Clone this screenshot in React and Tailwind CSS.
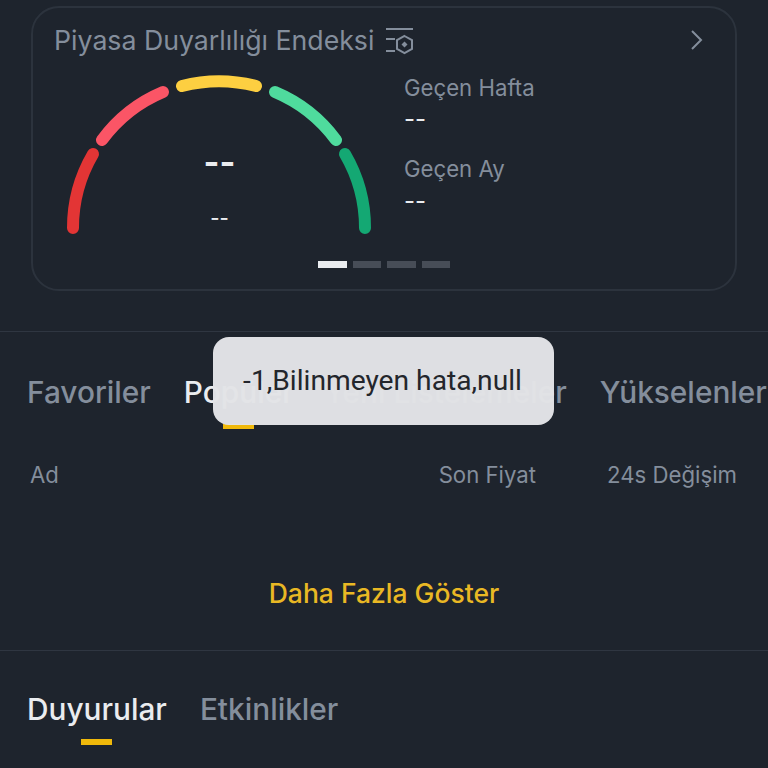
export default function App() {
  return (
    <div className="relative w-[768px] h-[768px] overflow-hidden bg-[#1e242d] font-['Inter','Liberation_Sans',sans-serif]">
      <div className="pt-[6px] px-[31px]">
        <section className="h-[285px] rounded-[28px] border-2 border-[#2c333d] flex flex-col">
          <header className="flex items-center pl-[21px] pr-[30px] pt-[15px] h-[49px]">
            <h2 className="text-[26.7px] leading-[34px] text-[#848e9c] font-normal whitespace-nowrap">Piyasa Duyarlılığı Endeksi</h2>
            <svg className="ml-[11px] mt-[3px]" width="30" height="30" viewBox="0 0 30 30" fill="none" stroke="#848e9c" strokeWidth="2">
              <path d="M1 2h27M1 12h9M1 24h9" />
              <path d="M19.5 9l7.5 4.2v8.6l-7.5 4.2-7.5-4.2v-8.6z" />
              <path d="M19.5 14.5l3 3-3 3-3-3z" fill="#848e9c" stroke="none" />
            </svg>
            <svg className="ml-auto" width="16" height="22" viewBox="0 0 16 22" fill="none" stroke="#848e9c" strokeWidth="2">
              <path d="M3 2l9 9-9 9" />
            </svg>
          </header>
          <div className="flex pl-[32px] pt-[16px]">
            <div className="relative w-[312px] h-[170px] shrink-0">
              <svg width="312" height="170" viewBox="0 0 312 170" fill="none" strokeWidth="12" strokeLinecap="round">
                <path d="M8 155A146 146 0 0 1 28 81" stroke="#e33535" />
                <path d="M37 67A146 146 0 0 1 98 19" stroke="#fb5566" />
                <path d="M117 13A146 146 0 0 1 191 13" stroke="#fdcf41" />
                <path d="M210 19A146 146 0 0 1 271 67" stroke="#4fdb9d" />
                <path d="M280 81A146 146 0 0 1 300 155" stroke="#14a873" />
              </svg>
              <div className="absolute inset-x-0 top-[72px] flex flex-col items-center pr-[3px]">
                <span className="text-[34px] leading-[34px] font-bold text-[#eaecef]">--</span>
                <span className="mt-[22px] text-[20px] leading-[34px] font-medium text-[#eaecef]">--</span>
              </div>
            </div>
            <div className="ml-[27px] -mt-[2px] flex flex-col">
              <span className="text-[22.2px] leading-[34px] text-[#848e9c]">Geçen Hafta</span>
              <span className="text-[24px] leading-[28px] text-[#eaecef]">--</span>
              <span className="text-[22.2px] leading-[34px] text-[#848e9c] mt-[19px]">Geçen Ay</span>
              <span className="text-[24px] leading-[28px] text-[#eaecef] mt-[1px]">--</span>
            </div>
          </div>
          <div className="flex justify-center gap-[6px] mt-[18px]">
            <span className="w-[28.5px] h-[7px] bg-[#eaecef]" />
            <span className="w-[28.5px] h-[7px] bg-[#474d57]" />
            <span className="w-[28.5px] h-[7px] bg-[#474d57]" />
            <span className="w-[28.5px] h-[7px] bg-[#474d57]" />
          </div>
        </section>
      </div>

      <div className="mt-[40px] h-[1px] bg-[#2f3641]" />

      <nav className="flex pl-[27px] pt-[40px] h-[97px] whitespace-nowrap text-[29.8px] leading-[40px] text-[#848e9c] font-medium">
        <span>Favoriler</span>
        <span className="relative ml-[33px] text-[#eaecef]">
          Popüler
          <span className="absolute left-[39px] top-[52px] w-[31px] h-[5px] bg-[#f0b90b]" />
        </span>
        <span className="ml-[42px] w-[231px] flex justify-end">Yeni Listelemeler</span>
        <span className="ml-[33px]">Yükselenler</span>
      </nav>

      <div className="flex pl-[30px] pr-[31px] pt-[31px] text-[22.2px] leading-[30px] text-[#848e9c]">
        <span>Ad</span>
        <span className="ml-auto">Son Fiyat</span>
        <span className="ml-[71px]">24s Değişim</span>
      </div>

      <div className="pt-[85px] text-center text-[26.5px] leading-[36px] font-medium text-[#e9b824]">Daha Fazla Göster</div>

      <div className="mt-[39px] h-[1px] bg-[#2f3641]" />

      <nav className="flex gap-[33px] pl-[27px] pt-[38px] text-[29.8px] leading-[40px] font-medium text-[#848e9c]">
        <span className="relative text-[#eaecef]">
          Duyurular
          <span className="absolute left-[54px] top-[50px] w-[31px] h-[6px] bg-[#f0b90b]" />
        </span>
        <span>Etkinlikler</span>
      </nav>

      <div className="absolute left-[213px] top-[337px] w-[341px] h-[88px] rounded-[16px] bg-[#e2e3e7]/[0.98] flex items-center justify-center pr-[2px] font-['Roboto',sans-serif] text-[28.2px] text-[#23262c]">
        -1,Bilinmeyen hata,null
      </div>
    </div>
  );
}
